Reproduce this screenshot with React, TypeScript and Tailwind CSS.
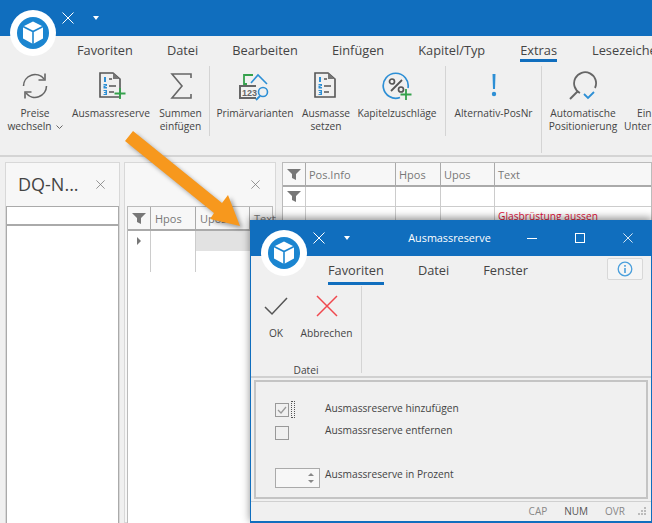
const font = "font-['Open_Sans','Noto_Sans',sans-serif]";

function Logo({ className }: { className: string }) {
  return (
    <svg className={className} width="46" height="46" viewBox="0 0 46 46">
      <circle cx="23" cy="23" r="23" fill="#fff" />
      <circle cx="23" cy="23" r="16" fill="#1b85d0" />
      <path d="M23 11.5 33 16.5 33 28.5 23 34 13 28.5 13 16.5Z" fill="#fff" />
      <path d="M13 16.500 23 21.500 33 16.500 M23 21.500V34" stroke="#1b85d0" strokeWidth="1.600" fill="none" />
    </svg>
  );
}

function Filter() {
  return (
    <svg width="14" height="11" viewBox="0 0 14 11">
      <path d="M0 0H14L9 5V11L5 9V5Z" fill="#777" />
    </svg>
  );
}

function ThinX({ size = 12, color = "#fff" }: { size?: number; color?: string }) {
  return (
    <svg width={size} height={size} viewBox="0 0 12 12">
      <path d="M.5.5 11.500 11.500M11.500.5.500 11.500" stroke={color} strokeWidth="1" />
    </svg>
  );
}

function DocIcon({ plus }: { plus?: boolean }) {
  return (
    <svg width="30" height="30" viewBox="0 0 30 30">
      <path d="M4 2H17L24 8V26H4Z" fill="none" stroke="#555" strokeWidth="1.600" />
      <path d="M17 2V8H24Z" fill="#777" />
      <path d="M8 6H10V11H8ZM7.500 13H11V15H9.500V16H11V17.500H7.500V15H9.500V14.500H7.500ZM7.500 19H11V24H7.500V23H9.500V22H8V21H9.500V20H7.500Z" fill="#2d8fd5" />
      <path d="M13 8H16M13 15H20M13 21H18" stroke="#555" strokeWidth="1.500" />
      {plus && <path d="M24 17V28M18.500 22.500H29.500" stroke="#35a14c" strokeWidth="1.800" />}
    </svg>
  );
}

const icons: Record<string, React.ReactNode> = {
  preise: (
    <svg width="30" height="30" viewBox="0 0 30 30" fill="none" stroke="#666" strokeWidth="1.600">
      <path d="M3.500 15A11.500 11.500 0 0 1 24 8" />
      <path d="M26.500 15A11.500 11.500 0 0 1 6 22" />
      <path d="M25 2.500V9H18.500M5 27.500V21H11.500" />
    </svg>
  ),
  reserve: <DocIcon plus />,
  summen: (
    <svg width="30" height="30" viewBox="0 0 30 30" fill="none" stroke="#666" strokeWidth="1.600">
      <path d="M25 7V3H6L16 15 6 27H25V23" />
    </svg>
  ),
  primaer: (
    <svg width="32" height="30" viewBox="0 0 32 30" fill="none">
      <path d="M14 4H5V13H8" stroke="#35a14c" strokeWidth="1.800" />
      <path d="M12 12 19 4 28 13" stroke="#2d8fd5" strokeWidth="1.600" />
      <path d="M17 15H1V27H17" stroke="#666" strokeWidth="2" />
      <text x="3" y="25" fontSize="9" fontWeight="700" fill="#666" fontFamily="Liberation Sans">123</text>
      <circle cx="24" cy="21" r="4.500" stroke="#2d8fd5" strokeWidth="1.600" />
      <path d="M21 25 17 29" stroke="#2d8fd5" strokeWidth="1.800" />
    </svg>
  ),
  setzen: <DocIcon />,
  kapitel: (
    <svg width="30" height="30" viewBox="0 0 30 30" fill="none">
      <path d="M26 17A12.500 12.500 0 1 0 18 26.500" stroke="#2d8fd5" strokeWidth="1.700" />
      <path d="M20 9 9 20" stroke="#555" strokeWidth="1.800" />
      <circle cx="10" cy="10.500" r="2.500" stroke="#555" strokeWidth="1.700" />
      <circle cx="19" cy="18.500" r="2.500" stroke="#555" strokeWidth="1.700" />
      <path d="M24 18V29M18.500 23.500H29.500" stroke="#35a14c" strokeWidth="1.800" />
    </svg>
  ),
  alt: (
    <svg width="30" height="30" viewBox="0 0 30 30">
      <path d="M13.500 3H16.500L16 18H14Z" fill="#2d8fd5" />
      <circle cx="15" cy="23" r="2.200" fill="#2d8fd5" />
    </svg>
  ),
  auto: (
    <svg width="30" height="30" viewBox="0 0 30 30" fill="none">
      <path d="M12 22A11 11 0 1 1 27 17" stroke="#666" strokeWidth="1.800" />
      <path d="M10 20 2 28" stroke="#666" strokeWidth="2" />
      <path d="M16 23 20 27 26 21" stroke="#2d8fd5" strokeWidth="1.800" />
    </svg>
  ),
};

const ribbon = [
  { w: "w-[70px]", icon: "preise", lines: ["Preise", "wechseln"], menu: true },
  { w: "w-[82px]", icon: "reserve", lines: ["Ausmassreserve"] },
  { w: "w-[57px]", icon: "summen", lines: ["Summen", "einfügen"] },
  { sep: true, h: "h-[70px]" },
  { w: "w-[90px]", icon: "primaer", lines: ["Primärvarianten"] },
  { w: "w-[52px]", icon: "setzen", lines: ["Ausmasse", "setzen"] },
  { w: "w-[93px] pr-[3px]", icon: "kapitel", lines: ["Kapitelzuschläge"] },
  { sep: true, h: "h-[70px]" },
  { w: "w-[95px]", icon: "alt", lines: ["Alternativ-PosNr"] },
  { sep: true, h: "h-[87px]" },
  { w: "w-[82px]", icon: "auto", lines: ["Automatische", "Positionierung"] },
];

function RibbonButton({ w, icon, lines, menu }: { w?: string; icon?: string; lines?: string[]; menu?: boolean }) {
  return (
    <div className={`${w} shrink-0 flex flex-col items-center`}>
      <div className="h-[36px] mt-[3px] flex items-center justify-center">{icon ? icons[icon] : null}</div>
      <div className="mt-[3px] text-[10.200px] leading-[13px] text-[#444] text-center whitespace-nowrap">
        {lines?.map((l, i) => (
          <div key={l} className="flex items-center justify-center gap-[4px]">
            {l}
            {menu && i === 1 && (
              <svg width="7" height="4" viewBox="0 0 7 4" fill="none"><path d="M.5.500 3.500 3.500 6.500.5" stroke="#666" /></svg>
            )}
          </div>
        ))}
      </div>
    </div>
  );
}

function GridHead({ cols }: { cols: { w: string; label: string }[] }) {
  return (
    <div className="flex h-[24px] border-b-2 border-[#aaa] bg-[#f7f7f7]">
      <div className="w-[23px] shrink-0 border-r border-[#aaa] flex items-center justify-center"><Filter /></div>
      {cols.map((c) => (
        <div key={c.label} className={`${c.w} shrink-0 border-r border-[#aaa] last:border-r-0 pl-[4px] text-[11px] leading-[23px] text-[#777]`}>{c.label}</div>
      ))}
    </div>
  );
}

export default function App() {
  return (
    <div className={`relative w-[652px] h-[523px] overflow-hidden bg-[#f0f0f0] ${font}`}>
      {/* main window */}
      <div className="h-[36px] bg-[#106ebe] flex items-center pl-[62px] pb-[1px]">
        <ThinX />
        <div className="ml-[19px] w-0 h-0 border-x-[3.500px] border-x-transparent border-t-[4px] border-t-white" />
      </div>
      <div className="flex gap-[34px] pl-[77px] h-[29px] pt-[4px] text-[12.800px] leading-[20px] text-[#444] whitespace-nowrap">
        {["Favoriten", "Datei", "Bearbeiten", "Einfügen", "Kapitel/Typ", "Extras", "Lesezeiche"].map((t) => (
          <div key={t} className={t === "Extras" ? "h-[22px] border-b-[3px] border-[#106ebe] ml-[1px]" : "last:ml-[1px]"}>{t}</div>
        ))}
      </div>
      <div className="h-[92px] flex overflow-hidden border-b-2 border-[#d4d4d4]">
        {ribbon.map((r, i) =>
          r.sep ? (
            <div key={i} className={`${r.h} w-[1px] shrink-0 bg-[#d4d4d4] mt-[1px]`} />
          ) : (
            <RibbonButton key={i} w={r.w} icon={r.icon} lines={r.lines} menu={r.menu} />
          ),
        )}
        <div className="flex-1 min-w-0 pt-[42px] text-[10.200px] leading-[13px] text-[#444] whitespace-nowrap">
          <div className="pl-[13px]">Ein</div>
          <div>Unter</div>
        </div>
      </div>

      <div className="flex h-[366px] pt-[3px] pl-[2px] gap-[2px]">
        {/* DQ panel */}
        <div className="w-[115px] shrink-0 border border-[#d8d8d8] bg-[#f7f7f7] ml-[3px] mt-[2px]">
          <div className="h-[43px] flex items-center pl-[12px] pr-[14px] justify-between">
            <span className="text-[18px] text-[#444]">DQ-N...</span>
            <ThinX size={9} color="#777" />
          </div>
          <div className="h-[20px] bg-white border border-[#aaa] border-b-2" />
          <div className="h-[300px] bg-white border-x border-[#aaa]" />
        </div>
        {/* second panel */}
        <div className="w-[152px] shrink-0 border border-[#d8d8d8] bg-[#f7f7f7] ml-[2px] mt-[2px]">
          <div className="h-[43px] flex items-center justify-end pr-[15px]">
            <ThinX size={9} color="#777" />
          </div>
          <div className="mx-[2px] h-[320px] border border-[#bbb] bg-white">
            <GridHead cols={[{ w: "w-[45px]", label: "Hpos" }, { w: "w-[54px]", label: "Upos" }, { w: "w-[20px]", label: "Text" }]} />
            <div className="flex h-[41px]">
              <div className="w-[23px] shrink-0 border-r border-[#ccc] flex items-start justify-center pt-[6px]">
                <div className="w-0 h-0 border-y-[4px] border-y-transparent border-l-[4px] border-l-[#777]" />
              </div>
              <div className="w-[45px] shrink-0 border-r border-[#ccc]" />
              <div className="flex-1 h-[20px] bg-[#e2e2e2]" />
            </div>
          </div>
        </div>
        {/* main grid */}
        <div className="flex-1 border border-[#bbb] bg-white ml-[4px] mt-[2px]">
          <div className="flex h-[24px] border-b-2 border-[#aaa] bg-[#f7f7f7]">
            <div className="w-[23px] shrink-0 border-r border-[#aaa] flex items-center justify-center"><Filter /></div>
            {[{ w: "w-[90px]", l: "Pos.Info" }, { w: "w-[45px]", l: "Hpos" }, { w: "w-[54px]", l: "Upos" }, { w: "w-[150px]", l: "Text" }].map((c) => (
              <div key={c.l} className={`${c.w} shrink-0 border-r border-[#aaa] last:border-r-0 pl-[3px] text-[11px] leading-[23px] text-[#777]`}>{c.l}</div>
            ))}
          </div>
          {[0, 1].map((row) => (
            <div key={row} className="flex h-[20px] border-b border-[#ccc]">
              <div className="w-[23px] shrink-0 border-r border-[#ccc] flex items-center justify-center">{row === 0 && <Filter />}</div>
              <div className="w-[90px] shrink-0 border-r border-[#ccc]" />
              <div className="w-[45px] shrink-0 border-r border-[#ccc]" />
              <div className="w-[54px] shrink-0 border-r border-[#ccc]" />
              <div className="pl-[3px] text-[10.200px] leading-[19px] text-[#e0103a]">{row === 1 ? "Glasbrüstung aussen" : ""}</div>
            </div>
          ))}
        </div>
      </div>

      <Logo className="absolute left-[10px] top-[10px]" />

      {/* orange arrow */}
      <svg className="absolute left-0 top-0 drop-shadow-[3px_3px_2px_rgba(0,0,0,0.35)]" width="260" height="240" viewBox="0 0 260 240">
        <path d="M133 131 222 203 228 195 240 226 210 219 214 213 125 141Z" fill="#f7981d" />
      </svg>

      {/* Ausmassreserve dialog */}
      <div className="absolute left-[250px] top-[220px] w-[402px] h-[303px] bg-[#f0f0f0] border-x-[1px] border-b-2 border-[#106ebe] shadow-[0_-2px_8px_rgba(0,0,0,0.45)] flex flex-col">
        <div className="relative h-[36px] shrink-0 bg-[#106ebe] flex items-center pl-[62px] text-white">
          <ThinX />
          <div className="ml-[19px] w-0 h-0 border-x-[3.500px] border-x-transparent border-t-[4px] border-t-white" />
          <div className="flex-1 pl-[22px] text-[10.800px] text-center">Ausmassreserve</div>
          <div className="flex items-center gap-[38px] pr-[18px]">
            <div className="w-[10px] h-[1px] bg-white" />
            <div className="w-[10px] h-[10px] border border-white" />
            <ThinX size={10} />
          </div>
        </div>
        <div className="relative h-[30px] shrink-0 flex gap-[34px] pl-[77px] pt-[4px] text-[12.800px] leading-[20px] text-[#444]">
          <div className="h-[25px] border-b-[3px] border-[#106ebe]">Favoriten</div>
          <div>Datei</div>
          <div>Fenster</div>
          <div className="absolute right-[8px] top-[2px] w-[36px] h-[22px] border border-[#d8d8d8] rounded-[2px] bg-[#f5f5f5] flex items-center justify-center">
            <svg width="16" height="16" viewBox="0 0 16 16" fill="none">
              <circle cx="8" cy="8" r="6.800" stroke="#4a9fdc" strokeWidth="1.300" />
              <path d="M8 7V12M8 4V5.800" stroke="#4a9fdc" strokeWidth="1.600" />
            </svg>
          </div>
        </div>
        <div className="h-[92px] shrink-0 flex border-b-2 border-[#d0d0d0]">
          <div className="w-[110px] flex flex-col">
            <div className="flex">
              <div className="w-[47px] flex flex-col items-center pl-[3px]">
                <svg className="mt-[9px]" width="24" height="22" viewBox="0 0 24 22" fill="none">
                  <path d="M1 12 8 19 23 3" stroke="#555" strokeWidth="1.500" />
                </svg>
                <div className="mt-[10px] text-[10.200px] leading-[13px] text-[#444]">OK</div>
              </div>
              <div className="w-[57px] flex flex-col items-center">
                <svg className="mt-[9px]" width="22" height="22" viewBox="0 0 22 22" fill="none">
                  <path d="M1 1 21 21M21 1 1 21" stroke="#f0484e" strokeWidth="1.500" />
                </svg>
                <div className="mt-[10px] text-[10.200px] leading-[13px] text-[#444]">Abbrechen</div>
              </div>
            </div>
            <div className="mt-[24px] text-center text-[10.200px] leading-[13px] text-[#444]">Datei</div>
          </div>
          <div className="w-[1px] h-[87px] bg-[#d4d4d4]" />
        </div>
        <div className="relative mx-[3px] mt-[2px] h-[119px] shrink-0 border-2 border-[#c4c4c4] bg-[#f0f0f0] text-[10.200px] text-[#444]">
          <div className="absolute left-[19px] top-[21px] w-[14px] h-[14px] border border-[#999] flex items-center justify-center">
            <svg width="10" height="8" viewBox="0 0 10 8" fill="none"><path d="M1 4 4 7 9 1" stroke="#999" strokeWidth="1.300" /></svg>
          </div>
          <div className="absolute left-[35px] top-[19px] w-[4px] h-[17px] border border-dotted border-[#555]" />
          <div className="absolute left-[69px] top-[19px] leading-[14px]">Ausmassreserve hinzufügen</div>
          <div className="absolute left-[19px] top-[44px] w-[14px] h-[14px] border border-[#999]" />
          <div className="absolute left-[69px] top-[41px] leading-[14px]">Ausmassreserve entfernen</div>
          <div className="absolute left-[19px] top-[86px] w-[45px] h-[20px] border border-[#aaa] bg-[#f7f7f7] flex flex-col items-end justify-center gap-[4px] pr-[5px]">
            <div className="w-0 h-0 border-x-[3px] border-x-transparent border-b-[3px] border-b-[#888]" />
            <div className="w-0 h-0 border-x-[3px] border-x-transparent border-t-[3px] border-t-[#888]" />
          </div>
          <div className="absolute left-[69px] top-[85px] leading-[14px]">Ausmassreserve in Prozent</div>
        </div>
        <div className="mt-[2px] flex-1 border-t border-[#d0d0d0] flex items-center justify-end gap-[17px] pr-[5px] text-[10px] text-[#888]">
          <span>CAP</span>
          <span className="text-[#555]">NUM</span>
          <span>OVR</span>
          <svg className="-ml-[5px]" width="9" height="9" viewBox="0 0 9 9" fill="#bbb"><path d="M7 0h2v2H7zM4 3h2v2H4zM7 3h2v2H7zM1 6h2v2H1zM4 6h2v2H4zM7 6h2v2H7z" /></svg>
        </div>
      </div>
      <Logo className="absolute left-[261px] top-[230px]" />
    </div>
  );
}
